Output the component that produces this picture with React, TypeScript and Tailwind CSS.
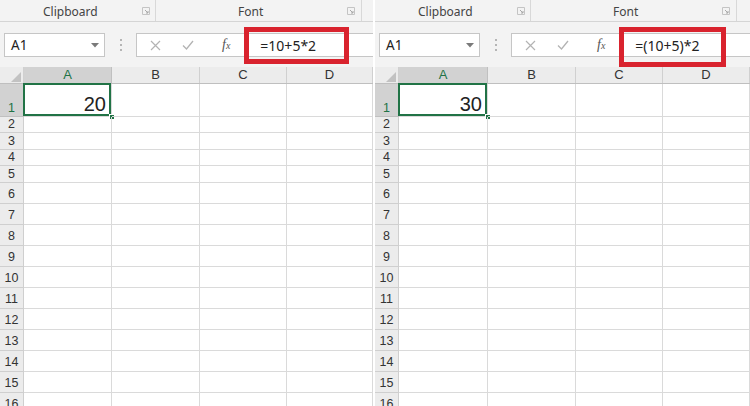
import React from "react";

const UI = { fontFamily: '"Noto Sans", "Open Sans", sans-serif' };
const CELL = { fontFamily: '"Liberation Sans", Arial, sans-serif' };

const ROW_HEIGHTS = [33, 16, 17, 16, 17, 21, 21, 21, 21, 21, 21, 21, 21, 21, 21, 21];
const COLS = ["A", "B", "C", "D"];

type PanelProps = {
  formula: string;
  value: string;
  colWidths: number[];
  boxW: number;
  boxH: number;
  panelW: number;
};

function Launcher() {
  return (
    <svg width="8" height="8" viewBox="0 0 8 8" className="shrink-0">
      <path d="M0.5 0.5h7v7h-7z" fill="none" stroke="#c4c4c4" />
      <path d="M3 3l3 3M6 4v2h-2" fill="none" stroke="#a8a8a8" />
    </svg>
  );
}

function Panel({ formula, value, colWidths, boxW, boxH, panelW }: PanelProps) {
  return (
    <div className="relative flex flex-col shrink-0 bg-white overflow-hidden" style={{ width: panelW }}>
      {/* Ribbon group labels */}
      <div className="flex shrink-0 h-[22px] bg-[#f3f3f3] border-b border-[#d5d5d5] text-[12px] text-[#444]" style={UI}>
        <div className="flex items-center w-[156px] pl-[43px] pr-[5px] border-r border-[#d8d8d8]">
          <span className="flex-1 pt-[3px]">Clipboard</span>
          <Launcher />
        </div>
        <div className="flex items-center w-[206px] pl-[80px] pr-[6px] border-r border-[#d8d8d8]">
          <span className="flex-1 pl-[2px] pt-[3px]">Font</span>
          <Launcher />
        </div>
        <div className="flex-1" />
      </div>

      {/* Formula bar */}
      <div className="relative flex shrink-0 h-[45px] bg-[#f3f3f3] pt-[11px]">
        <div className="flex items-center w-[101px] h-[24px] ml-[4px] bg-white border border-[#c6c6c6] pl-[6px] pr-[5px]">
          <span className="flex-1 text-[13.5px] text-[#222]" style={UI}>A1</span>
          <svg width="8" height="5" viewBox="0 0 8 5">
            <path d="M0 0h8L4 4.5z" fill="#7a7a7a" />
          </svg>
        </div>
        <div className="flex flex-col items-center justify-center gap-[3px] w-[31px] h-[24px]">
          <span className="w-[2px] h-[2px] bg-[#b5b5b5]" />
          <span className="w-[2px] h-[2px] bg-[#b5b5b5]" />
          <span className="w-[2px] h-[2px] bg-[#b5b5b5]" />
        </div>
        <div className="flex flex-1 items-center h-[24px] bg-white border-y border-l border-[#c6c6c6]">
          <svg width="11" height="11" viewBox="0 0 11 11" className="ml-[13px]">
            <path d="M1 1l9 9M10 1l-9 9" stroke="#b3b3b3" strokeWidth="1.2" />
          </svg>
          <svg width="12" height="10" viewBox="0 0 12 10" className="ml-[21px]">
            <path d="M1 5.5l3.5 3.5L11 1" fill="none" stroke="#b3b3b3" strokeWidth="1.3" />
          </svg>
          <span className="ml-[28px] text-[14px] italic text-[#555] leading-none" style={{ fontFamily: '"Liberation Serif", serif' }}>
            f<span className="text-[10px]">x</span>
          </span>
          <span className="ml-[30px] text-[14px] text-[#222]" style={UI}>{formula}</span>
        </div>
        {/* red highlight */}
        <div
          className="absolute top-[5px] left-[244px] border-[5px] border-[#d9232e]"
          style={{ width: boxW, height: boxH }}
        />
      </div>

      {/* Column headers */}
      <div className="flex shrink-0 h-[17px] bg-[#ececec] border-b border-[#bfbfbf] text-[13px] text-[#333]" style={CELL}>
        <div className="relative w-[24px] border-r border-[#d0d0d0]">
          <svg width="10" height="10" viewBox="0 0 10 10" className="absolute right-[2px] bottom-[1px]">
            <path d="M10 0v10H0z" fill="#c2c2c2" />
          </svg>
        </div>
        {COLS.map((c, i) => (
          <div
            key={c}
            className={
              i === 0
                ? "flex items-center justify-center bg-[#d2d2d2] text-[#217346] border-r border-[#c0c0c0]"
                : "flex items-center justify-center border-r border-[#d0d0d0]"
            }
            style={{ width: colWidths[i] }}
          >
            {c}
          </div>
        ))}
      </div>

      {/* Rows */}
      {ROW_HEIGHTS.map((h, r) => (
        <div key={r} className="flex shrink-0" style={{ height: h }}>
          <div
            className={
              r === 0
                ? "flex items-end justify-center pb-[2px] w-[24px] bg-[#d2d2d2] text-[#217346] border-r border-b border-[#c0c0c0] text-[12.5px] leading-none"
                : "flex items-center justify-center w-[24px] bg-[#ececec] text-[#333] border-r border-b border-[#cfcfcf] text-[12.5px]"
            }
            style={CELL}
          >
            <span className={r >= 5 ? "pt-[3px]" : ""}>{r + 1}</span>
          </div>
          {COLS.map((c, i) => (
            <div
              key={c}
              className="relative border-r border-b border-[#dadada]"
              style={{ width: colWidths[i] }}
            >
              {r === 0 && i === 0 && (
                <>
                  <div className="absolute -left-[1px] -top-[1px] right-0 bottom-0 border-2 border-[#217346]" />
                  <div className="absolute -right-[4px] -bottom-[4px] w-[6px] h-[6px] bg-[#217346] border border-white" />
                  <div className="absolute right-[5px] bottom-[2px] text-[20px] leading-none text-[#222]" style={CELL}>
                    {value}
                  </div>
                </>
              )}
            </div>
          ))}
        </div>
      ))}
    </div>
  );
}

export default function App() {
  return (
    <div className="flex w-[750px] h-[406px] overflow-hidden bg-white gap-[2px]">
      <Panel formula="=10+5*2" value="20" colWidths={[88, 88, 87, 86]} boxW={105} boxH={37} panelW={373} />
      <Panel formula="=(10+5)*2" value="30" colWidths={[89, 88, 87, 87]} boxW={107} boxH={40} panelW={375} />
    </div>
  );
}
